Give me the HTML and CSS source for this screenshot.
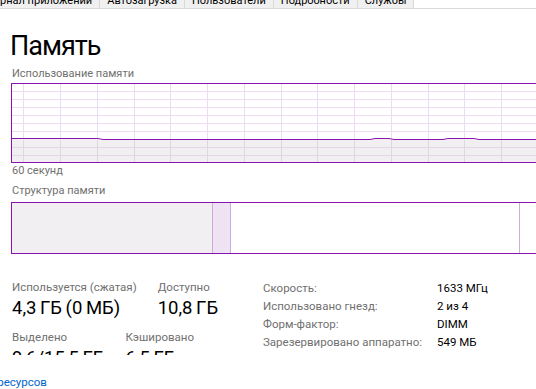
FILE: index.html
```html
<!DOCTYPE html>
<html lang="ru">
<head>
<meta charset="utf-8">
<title>Память</title>
<link rel="stylesheet" href="styles.css">
</head>
<body>
<nav class="tabs">
  <div class="tab tab-first">Журнал приложений</div>
  <div class="tab">Автозагрузка</div>
  <div class="tab">Пользователи</div>
  <div class="tab">Подробности</div>
  <div class="tab">Службы</div>
</nav>
<main class="content">
  <h1 class="title">Память</h1>
  <div class="caption caption-usage">Использование памяти</div>
  <div class="graph">
    <svg width="540" height="80" viewBox="0 0 540 80">
      <path d="M0,56 H87 L92,57 H359 L364,56 H378 L383,57 H432 L437,56 H463 L468,57 H540 V80 H0 Z" fill="#f2eff3"/>
      <g stroke="#eddcf1" stroke-width="1">
        <path d="M0,8.5H540M0,16.5H540M0,24.5H540M0,32.5H540M0,40.5H540M0,48.5H540"/>
      </g>
      <g stroke="#e4d5e9" stroke-width="1">
        <path d="M0,64.5H540M0,72.5H540"/>
      </g>
      <g stroke="#eddcf1" stroke-width="1">
        <path d="M12.5,0V56M49.5,0V56M86.5,0V56M123.5,0V56M159.5,0V56M196.5,0V56M233.5,0V56M270.5,0V56M306.5,0V56M343.5,0V56M380.5,0V56M417.5,0V56M453.5,0V56M490.5,0V56M527.5,0V56"/>
      </g>
      <g stroke="#e2d4e6" stroke-width="1">
        <path d="M12.5,57V80M49.5,57V80M86.5,57V80M123.5,57V80M159.5,57V80M196.5,57V80M233.5,57V80M270.5,57V80M306.5,57V80M343.5,57V80M380.5,57V80M417.5,57V80M453.5,57V80M490.5,57V80M527.5,57V80"/>
      </g>
      <path d="M0,55.5 H87 L92,56.5 H359 L364,55.5 H378 L383,56.5 H432 L437,55.5 H463 L468,56.5 H540" fill="none" stroke="#8b12ae" stroke-width="1"/>
      <path d="M0,0.5H540M0,79.5H540M0.5,0V80" fill="none" stroke="#8b12ae" stroke-width="1"/>
    </svg>
  </div>
  <div class="caption caption-time">60 секунд</div>
  <div class="caption caption-struct">Структура памяти</div>
  <div class="composition">
    <div class="seg seg-used"></div>
    <div class="seg seg-modified"></div>
    <div class="seg seg-standby"></div>
    <div class="seg seg-free"></div>
  </div>
  <section class="stats">
    <div class="stats-left">
      <div class="stat-row">
        <div class="stat">
          <div class="stat-label">Используется (сжатая)</div>
          <div class="stat-value">4,3 ГБ (0 МБ)</div>
        </div>
        <div class="stat">
          <div class="stat-label">Доступно</div>
          <div class="stat-value">10,8 ГБ</div>
        </div>
      </div>
      <div class="stat-row stat-row-second">
        <div class="stat">
          <div class="stat-label">Выделено</div>
          <div class="stat-value">9,6/15,5 ГБ</div>
        </div>
        <div class="stat">
          <div class="stat-label">Кэшировано</div>
          <div class="stat-value">6,5 ГБ</div>
        </div>
      </div>
    </div>
    <dl class="props">
      <dt>Скорость:</dt><dd>1633 МГц</dd>
      <dt>Использовано гнезд:</dt><dd>2 из 4</dd>
      <dt>Форм-фактор:</dt><dd>DIMM</dd>
      <dt>Зарезервировано аппаратно:</dt><dd>549 МБ</dd>
    </dl>
  </section>
</main>
<footer class="footer">
  <a class="link" href="#">Открыть монитор ресурсов</a>
</footer>
</body>
</html>
```
FILE: styles.css
```css
html, body {
  margin: 0;
  padding: 0;
}
body {
  width: 536px;
  height: 389px;
  overflow: hidden;
  background: #ffffff;
  font-family: Roboto, "Noto Sans", sans-serif;
  color: #000;
}
.tabs {
  display: flex;
  margin-top: -14px;
  height: 22px;
  border-bottom: 1px solid #d9d9d9;
  white-space: nowrap;
}
.tab {
  flex: none;
  font-size: 11px;
  line-height: 16px;
  padding: 7px 7px 0 7px;
  background: #f0f0f0;
  border-right: 1px solid #d9d9d9;
}
.tab-first {
  margin-left: -22px;
}
.content {
  padding-left: 11px;
  width: 560px;
}
.title {
  margin: 21px 0 0 -1px;
  font-size: 27px;
  line-height: 32px;
  letter-spacing: -1px;
  font-weight: 400;
  height: 32px;
}
.caption {
  font-size: 11px;
  line-height: 14px;
  color: #707070;
  padding-left: 1px;
}
.caption-usage { margin-top: 5px; }
.graph {
  margin-top: 2px;
  height: 80px;
}
.graph svg { display: block; }
.caption-time { margin-top: 1px; }
.caption-struct { margin-top: 6px; }
.composition {
  margin-top: 4px;
  height: 50px;
  border: 1px solid #8b12ae;
  border-right: none;
  display: flex;
}
.seg { height: 100%; flex: none; }
.seg-used { width: 200px; background: #f2eff3; border-right: 1px solid #d0a9de; }
.seg-modified { width: 17px; background: #efe3f3; border-right: 1px solid #d0a9de; }
.seg-standby { width: 288px; background: #fff; border-right: 1px solid #c9b3d2; }
.seg-free { flex: 1; background: #fff; }
.stats {
  margin-top: 25px;
  height: 76px;
  overflow: hidden;
  display: flex;
  padding-left: 1px;
}
.stats-left {
  width: 251px;
  flex: none;
}
.stat-row {
  display: flex;
  gap: 21px;
}
.stat-row-second { margin-top: 9px; }
.stat-label {
  font-size: 11.5px;
  line-height: 17px;
  color: #707070;
  white-space: nowrap;
}
.stat-value {
  font-size: 18.5px;
  line-height: 24px;
  word-spacing: -1px;
  white-space: nowrap;
}
.props {
  margin: 0;
  display: grid;
  grid-template-columns: 174px auto;
  font-size: 11.5px;
  line-height: 18px;
  align-content: start;
}
.props dt { color: #707070; white-space: nowrap; }
.props dd { margin: 0; white-space: nowrap; }
.footer {
  margin-top: 16px;
  white-space: nowrap;
  overflow: hidden;
}
.link {
  display: inline-block;
  margin-left: -102px;
  font-size: 11.5px;
  line-height: 16px;
  color: #0066cc;
  text-decoration: none;
}
```
